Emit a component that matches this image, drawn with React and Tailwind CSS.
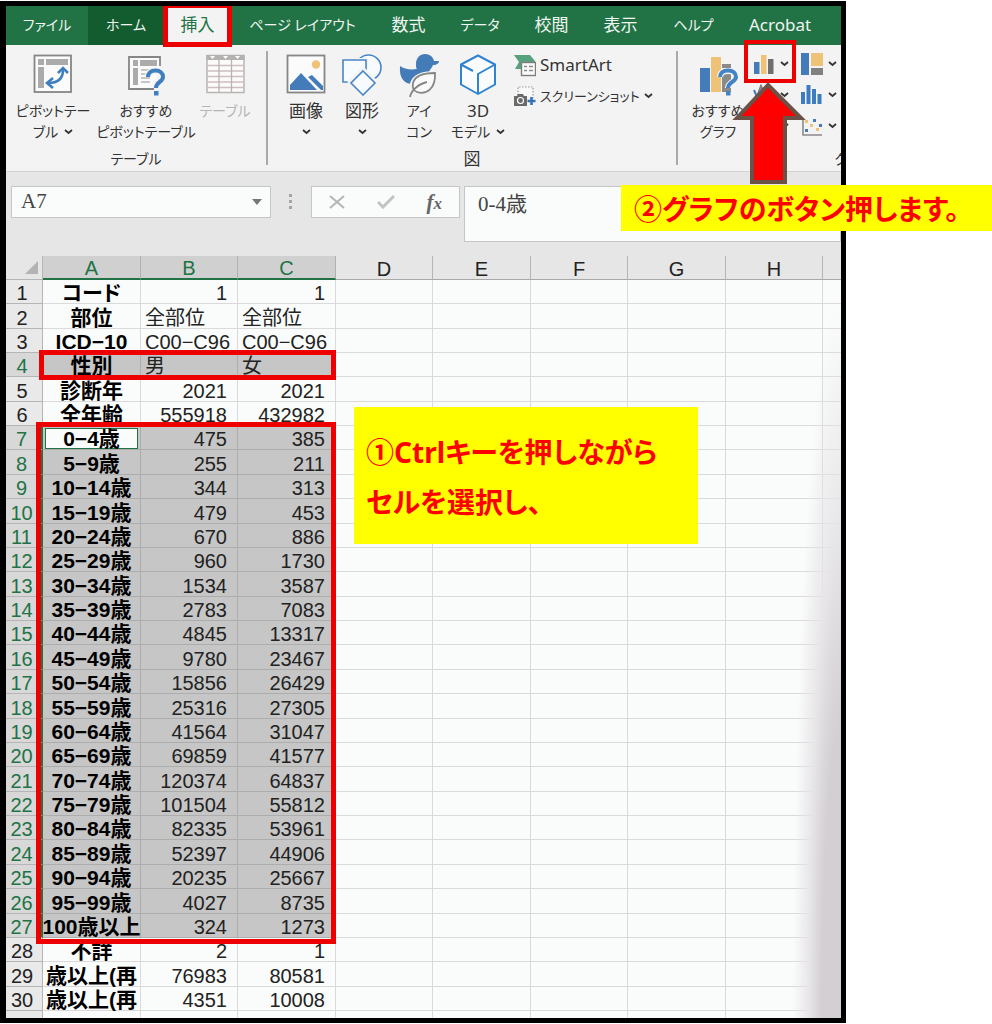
import React from 'react';

const tabs = [
  { label: 'ファイル', width: 'w-[82px]', size: 'text-[14px]' },
  { label: 'ホーム', width: 'w-[76px]', size: 'text-[14px]', hover: true },
  { label: '挿入', width: 'w-[67px]', size: 'text-[17px]', active: true },
  { label: 'ページ レイアウト', width: 'w-[143px]', size: 'text-[14px]' },
  { label: '数式', width: 'w-[69px]', size: 'text-[17px]' },
  { label: 'データ', width: 'w-[74px]', size: 'text-[14px]' },
  { label: '校閲', width: 'w-[69px]', size: 'text-[17px]' },
  { label: '表示', width: 'w-[69px]', size: 'text-[17px]' },
  { label: 'ヘルプ', width: 'w-[77px]', size: 'text-[14px]' },
  { label: 'Acrobat', width: 'w-[96px]', size: 'text-[17px]' },
];

const columns = ['A', 'B', 'C', 'D', 'E', 'F', 'G', 'H'];

const rows = [
  ['コード', '1', '1'],
  ['部位', '全部位', '全部位'],
  ['ICD−10', 'C00−C96', 'C00−C96'],
  ['性別', '男', '女'],
  ['診断年', '2021', '2021'],
  ['全年齢', '555918', '432982'],
  ['0−4歳', '475', '385'],
  ['5−9歳', '255', '211'],
  ['10−14歳', '344', '313'],
  ['15−19歳', '479', '453'],
  ['20−24歳', '670', '886'],
  ['25−29歳', '960', '1730'],
  ['30−34歳', '1534', '3587'],
  ['35−39歳', '2783', '7083'],
  ['40−44歳', '4845', '13317'],
  ['45−49歳', '9780', '23467'],
  ['50−54歳', '15856', '26429'],
  ['55−59歳', '25316', '27305'],
  ['60−64歳', '41564', '31047'],
  ['65−69歳', '69859', '41577'],
  ['70−74歳', '120374', '64837'],
  ['75−79歳', '101504', '55812'],
  ['80−84歳', '82335', '53961'],
  ['85−89歳', '52397', '44906'],
  ['90−94歳', '20235', '25667'],
  ['95−99歳', '4027', '8735'],
  ['100歳以上', '324', '1273'],
  ['不詳', '2', '1'],
  ['歳以上(再', '76983', '80581'],
  ['歳以上(再', '4351', '10008'],
];

const isSelected = (n) => n === 4 || (n >= 7 && n <= 27);

function Chevron() {
  return (
    <svg className="inline-block shrink-0" width="9" height="6" viewBox="0 0 9 6" fill="none" stroke="#333" strokeWidth="1.8">
      <path d="M1 1l3.5 3L8 1" />
    </svg>
  );
}

function PivotIcon() {
  return (
    <svg width="40" height="40" viewBox="0 0 40 40" fill="none">
      <rect x="1.5" y="1.5" width="36.5" height="36.5" fill="#fbfbfb" stroke="#868686" strokeWidth="1.8" />
      <path d="M5 5h6v6H5zM13 5h22v6H13zM5 13h6v21H5z" fill="#ababab" />
      <path d="M15 29C25 29 30 25 30 16" stroke="#3f7fc0" strokeWidth="2.6" />
      <path d="M25 19l5-5 5 5M20 24l-6 5 6 5" stroke="#3f7fc0" strokeWidth="2.6" />
    </svg>
  );
}

function RecommendedPivotIcon() {
  return (
    <svg width="40" height="42" viewBox="0 0 40 42" fill="none">
      <path d="M34 12V3H3v32h25" fill="#fbfbfb" stroke="#868686" strokeWidth="1.8" />
      <path d="M7 6h5v6H7zM14 6h17v6H14zM7 14h5v17H7z" fill="#ababab" />
      <path d="M15 16h8M15 20h6M15 24h9M15 28h9" stroke="#b5b5b5" strokeWidth="1.5" />
      <path d="M22 23c0-4 3-6 7.5-6s7.500 2 7.500 6c0 5-7 5-7 11" stroke="#f3f3f3" strokeWidth="7" />
      <path d="M22 23c0-4 3-6.500 7.500-6.500s7.500 2.500 7.500 6.500c0 5-7 5-7 11" stroke="#3f7fc0" strokeWidth="4" />
      <path d="M28 37h4.500v4.500H28z" fill="#3f7fc0" />
    </svg>
  );
}

function TableIcon() {
  return (
    <svg width="40" height="40" viewBox="0 0 40 40" fill="none">
      <rect x="2" y="1.500" width="37" height="37" fill="#fdfafa" stroke="#b9b4b4" strokeWidth="1.500" />
      <path d="M1.500 1h38v5h-38z" fill="#b3b1b1" />
      <path d="M5 2h5L7.500 5zM18 2h5l-2.500 3zM30 2h5l-2.500 3z" fill="#fff" />
      <path d="M2 11.500h37M2 17h37M2 22.500h37M2 28h37M2 33.500h37" stroke="#cdbfbf" strokeWidth="1.300" />
      <path d="M14 6v32M26.500 6v32" stroke="#b9b4b4" strokeWidth="1.300" />
    </svg>
  );
}

function ImageIcon() {
  return (
    <svg width="40" height="40" viewBox="0 0 40 40" fill="none">
      <rect x="1.500" y="1.500" width="37" height="37" fill="#fbfbfb" stroke="#868686" strokeWidth="1.800" />
      <circle cx="30" cy="10.500" r="4.200" fill="#eec377" />
      <path d="M4 36V31L15 19l16 17z" fill="#437cb8" />
      <path d="M22 23l4-2 11 11v4h-2z" fill="#437cb8" />
    </svg>
  );
}

function ShapesIcon() {
  return (
    <svg width="40" height="42" viewBox="0 0 40 42" fill="none" stroke="#4a86c5" strokeWidth="1.600">
      <circle cx="26.500" cy="13.500" r="12.500" fill="#f8fbfd" />
      <path d="M1 6h23v22H1z" fill="#f8fbfd" stroke="#f3f3f3" strokeWidth="4" />
      <path d="M1 6h23v22H1z" fill="#f8fbfd" />
      <path d="M21 15l13 13-13 13L8 28z" fill="#f3f3f3" stroke="#f3f3f3" strokeWidth="4" />
      <path d="M21 17l12 12-12 12L9 29z" fill="#f8fbfd" />
    </svg>
  );
}

function DuckIcon() {
  return (
    <svg width="40" height="44" viewBox="0 0 40 44" fill="none">
      <path d="M1 12c4 3 10 4 17 3-1-1-1-2-1-5 0-6 4-10 9-10 5 0 8 3 9 7l5 0c0 2-2 4-6 4-1 3-3 4-4 7-6 0-14 3-16 12C5 30 0 24 1 12z" fill="#437cb8" />
      <path d="M36 19c-10 0-21 2-23 11-1 5 2 8 5 9 9 3 20-3 18-20z" fill="#fafafa" stroke="#f3f3f3" strokeWidth="4" />
      <path d="M36 19c-10 0-20 2-22 10-1 5 1 8 4 9 9 3 19-3 18-19z" fill="#fafafa" stroke="#868686" strokeWidth="1.800" />
      <path d="M11 43c1-6 8-13 17-15" stroke="#868686" strokeWidth="1.800" />
    </svg>
  );
}

function CubeIcon() {
  return (
    <svg width="40" height="42" viewBox="0 0 40 42" fill="none" stroke="#2f83d0" strokeWidth="2" strokeLinejoin="round">
      <path d="M20 1.500l17 9v20l-17 9.500-17-9.500v-20z" fill="#f9fbfd" />
      <path d="M20 40V20l17-9.500M3 10.500l12 6.500" />
    </svg>
  );
}

function SmartArtIcon() {
  return (
    <svg width="22" height="23" viewBox="0 0 22 23" fill="none">
      <path d="M0 1h16l5 6v1H7v7H1l4-7z" fill="#58a17f" />
      <rect x="7.500" y="8.500" width="14" height="13" fill="#fafafa" stroke="#7d7d7d" strokeWidth="1.400" />
      <path d="M10 12.500h3M15 12.500h4M10 16.500h3M15 16.500h4" stroke="#8b8b8b" strokeWidth="1.500" />
    </svg>
  );
}

function ScreenshotIcon() {
  return (
    <svg width="22" height="22" viewBox="0 0 22 22" fill="none">
      <path d="M4 10V2h15v11" fill="#f8f8f8" stroke="#9a9a9a" strokeWidth="1.200" strokeDasharray="1.500 1.500" />
      <path d="M0 11h3l1-2h5l1 2h3v10H0z" fill="#6a6a6a" />
      <circle cx="6.500" cy="15.500" r="3" fill="#6a6a6a" stroke="#fff" strokeWidth="1.200" />
      <path d="M17.500 12v8M13.500 16h8" stroke="#3573b5" strokeWidth="2.600" />
    </svg>
  );
}

function RecommendedChartIcon() {
  return (
    <svg width="40" height="42" viewBox="0 0 40 42" fill="none">
      <path d="M2 14h10v24H2z" fill="#437cb8" />
      <path d="M13 3h10v35H13z" fill="#eec377" />
      <path d="M24 10h9v4h-9zM24 16h9v22h-9z" fill="#8a8a8a" />
      <path d="M22 23c0-4 3-6 8-6s8 2 8 6c0 5-8 5-8 11" stroke="#f3f3f3" strokeWidth="6" />
      <path d="M22 23c0-4 3-6.500 8-6.500s8 2.500 8 6.500c0 5-8 5-8 11" stroke="#4383c4" strokeWidth="4" />
      <path d="M28 37h4.500v4.500H28z" fill="#4383c4" />
    </svg>
  );
}

function ColumnChartIcon() {
  return (
    <svg width="22" height="22" viewBox="0 0 22 22">
      <path d="M1 9h5.500v12H1z" fill="#437cb8" />
      <path d="M8 2h5.500v19H8z" fill="#eec377" />
      <path d="M15 6h5.500v15H15z" fill="#6f6f6f" />
    </svg>
  );
}

function LineChartIcon() {
  return (
    <svg width="22" height="22" viewBox="0 0 22 22" fill="none" strokeWidth="2">
      <path d="M1 6l5 12 6-8 8 8" stroke="#437cb8" />
      <path d="M2 18L8 2l6 14 6-6" stroke="#7d7d7d" />
    </svg>
  );
}

function TreemapIcon() {
  return (
    <svg width="22" height="22" viewBox="0 0 22 22">
      <path d="M0 0h8v22H0z" fill="#437cb8" />
      <path d="M10 0h12v13H10z" fill="#eec377" />
      <path d="M10 15h12v7H10z" fill="#808080" />
    </svg>
  );
}

function HistogramIcon() {
  return (
    <svg width="22" height="22" viewBox="0 0 22 22">
      <path d="M0 8h4v12H0zM5.500 1h4v19h-4zM11 5h4v15h-4zM16.500 10h4v10h-4z" fill="#3c7cc0" />
    </svg>
  );
}

function ScatterIcon() {
  return (
    <svg width="22" height="22" viewBox="0 0 22 22">
      <path d="M2 4v16h19" fill="none" stroke="#8a8a8a" strokeWidth="1.600" />
      <path d="M4 5h3v3H4zM9 9h3v3H9zM15 13h3v3h-3z" fill="#eec377" />
      <path d="M12 4h3v3h-3zM18 9h3v3h-3zM4 14h3v3H4z" fill="#437cb8" />
    </svg>
  );
}

function PieIcon() {
  return (
    <svg width="22" height="22" viewBox="0 0 22 22">
      <circle cx="11" cy="11" r="8" fill="#437cb8" />
      <path d="M11 11V3a8 8 0 0 1 8 8z" fill="#eec377" />
    </svg>
  );
}

function RibbonButton({ icon, width, children }) {
  return (
    <button type="button" className={`flex shrink-0 flex-col items-center whitespace-nowrap ${width}`}>
      <span className="mb-[2px] flex h-[44px] items-start">{icon}</span>
      {children}
    </button>
  );
}

function ChartButton({ icon, label }) {
  return (
    <button type="button" aria-label={label} className="flex h-[31px] items-center gap-[5px]">
      {icon}
      <Chevron />
    </button>
  );
}

function Ribbon() {
  return (
    <div className="flex h-[127px] border-b border-[#d2d2d2] bg-[#f3f3f3] text-[14px] leading-[21px] text-[#333]">
      {/* テーブル */}
      <section className="flex w-[260px] shrink-0 flex-col pt-[9px]">
        <div className="flex h-[94px]">
          <RibbonButton width="w-[94px]" icon={<PivotIcon />}>
            <span>ピボットテー</span>
            <span className="flex items-center gap-1.5">ブル <Chevron /></span>
          </RibbonButton>
          <RibbonButton width="w-[92px]" icon={<RecommendedPivotIcon />}>
            <span>おすすめ</span>
            <span>ピボットテーブル</span>
          </RibbonButton>
          <RibbonButton width="w-[66px] text-[#b5b5b5]" icon={<TableIcon />}>
            <span>テーブル</span>
          </RibbonButton>
        </div>
        <div className="text-center">テーブル</div>
      </section>
      <div className="mt-[6px] h-[114px] w-[2px] shrink-0 bg-[#a9a9a9]" />

      {/* 図 */}
      <section className="flex w-[408px] shrink-0 flex-col pt-[9px]">
        <div className="flex h-[94px] pl-[10px]">
          <RibbonButton width="w-[56px]" icon={<ImageIcon />}>
            <span className="text-[17px]">画像</span>
            <span className="flex h-[21px] items-center"><Chevron /></span>
          </RibbonButton>
          <RibbonButton width="w-[56px]" icon={<ShapesIcon />}>
            <span className="text-[17px]">図形</span>
            <span className="flex h-[21px] items-center"><Chevron /></span>
          </RibbonButton>
          <RibbonButton width="w-[58px]" icon={<DuckIcon />}>
            <span>アイ</span>
            <span>コン</span>
          </RibbonButton>
          <RibbonButton width="w-[60px]" icon={<CubeIcon />}>
            <span className="text-[17px]">3D</span>
            <span className="flex items-center gap-1.5">モデル <Chevron /></span>
          </RibbonButton>
          <div className="flex flex-col pl-[6px]">
            <button type="button" className="flex h-[28px] items-start gap-1 text-[17px]">
              <SmartArtIcon /> SmartArt
            </button>
            <button type="button" className="flex h-[28px] items-center gap-1 whitespace-nowrap">
              <ScreenshotIcon /> <span className="text-[13px]">スクリーンショット</span> <Chevron />
            </button>
          </div>
        </div>
        <div className="text-center text-[17px]">図</div>
      </section>
      <div className="mt-[6px] h-[114px] w-[2px] shrink-0 bg-[#a9a9a9]" />

      {/* グラフ */}
      <section className="flex w-[350px] shrink-0 flex-col pt-[9px]">
        <div className="flex h-[94px] pl-[10px]">
          <RibbonButton width="w-[60px]" icon={<RecommendedChartIcon />}>
            <span>おすすめ</span>
            <span>グラフ</span>
          </RibbonButton>
          <div className="-mt-1.5 flex pl-[5px]">
            <div className="relative flex w-[48px] flex-col">
              <ChartButton label="縦棒グラフ" icon={<ColumnChartIcon />} />
              <ChartButton label="折れ線グラフ" icon={<LineChartIcon />} />
              <ChartButton label="円グラフ" icon={<PieIcon />} />
              <div className="absolute -left-[9px] -top-[8px] h-[43px] w-[52px] border-4 border-[#ee0000]" />
              <svg className="absolute -left-[21px] top-[34px]" width="76" height="104" viewBox="0 0 76 104">
                <path d="M36 3L69 36H53v64H20V36H5z" fill="#fe0000" stroke="#6b5146" strokeWidth="4" />
              </svg>
            </div>
            <div className="flex flex-col">
              <ChartButton label="ツリーマップ" icon={<TreemapIcon />} />
              <ChartButton label="ヒストグラム" icon={<HistogramIcon />} />
              <ChartButton label="散布図" icon={<ScatterIcon />} />
            </div>
          </div>
        </div>
        <div className="text-center">グラフ</div>
      </section>
    </div>
  );
}

function FormulaBar() {
  return (
    <div className="flex h-[84px] items-start bg-[#e6e6e6] pl-[5px] pt-[14px]">
      <div className="flex h-[32px] w-[260px] shrink-0 items-center border border-[#c6c6c6] bg-[#fafcfb] pr-[8px]">
        <input
          aria-label="名前ボックス"
          defaultValue="A7"
          className="min-w-0 flex-1 bg-transparent pl-[9px] font-['Liberation_Serif',serif] text-[21px] text-[#444] outline-none"
        />
        <svg width="10" height="6" viewBox="0 0 10 6"><path d="M0 0h10L5 6z" fill="#777" /></svg>
      </div>
      <svg className="mx-[18px] mt-[8px] shrink-0" width="4" height="16" viewBox="0 0 4 16" fill="#a5a5a5">
        <path d="M0 0h3v3H0zM0 6h3v3H0zM0 12h3v3H0z" />
      </svg>
      <div className="flex h-[32px] w-[149px] shrink-0 items-center justify-between border border-[#c6c6c6] bg-[#fafcfb] px-[17px]">
        <button type="button" aria-label="キャンセル">
          <svg width="16" height="14" viewBox="0 0 16 14" stroke="#b5b5b5" strokeWidth="2"><path d="M1 1l14 12M15 1L1 13" /></svg>
        </button>
        <button type="button" aria-label="入力">
          <svg width="18" height="14" viewBox="0 0 18 14" fill="none" stroke="#c2c2c2" strokeWidth="3"><path d="M1 7l5 5L17 1" /></svg>
        </button>
        <button type="button" className="font-['Liberation_Serif',serif] text-[21px] font-bold italic leading-none text-[#666]">
          f<span className="text-[17px]">x</span>
        </button>
      </div>
      <textarea
        aria-label="数式バー"
        defaultValue="0-4歳"
        className="ml-[4px] h-[56px] min-w-0 flex-1 resize-none border border-[#c6c6c6] bg-[#fafcfb] pl-[13px] pt-[4px] font-['Liberation_Serif','Noto_Sans_CJK_JP',serif] text-[21px] leading-[26px] text-[#444] outline-none"
      />
    </div>
  );
}

function Sheet() {
  return (
    <div className="relative">
      <table className="w-full table-fixed border-separate border-spacing-0 whitespace-nowrap bg-[#fafcfb] font-['Liberation_Sans','Noto_Sans_CJK_JP',sans-serif] text-[20px] leading-[20px] text-[#222]">
        <colgroup>
          <col className="w-[37px]" />
          {columns.map((c) => (
            <col key={c} className="even:w-[98px] odd:w-[97px]" />
          ))}
          <col />
        </colgroup>
        <thead>
          <tr className="h-[24px] bg-[#e6e6e6]">
            <th className="border-b border-r border-[#b5b5b5] p-0">
              <svg className="ml-auto mr-[4px]" width="13" height="13" viewBox="0 0 13 13"><path d="M13 0v13H0z" fill="#b3b3b3" /></svg>
            </th>
            {columns.map((c, i) => (
              <th
                key={c}
                scope="col"
                className={`border-r p-0 pt-[2px] font-normal ${i < 3 ? 'border-b-2 border-r-[#b0b0b0] border-b-[#217346] bg-[#d0d0d0] text-[#217346]' : 'border-b border-r-[#b5b5b5] border-b-[#a8a8a8]'}`}
              >
                {c}
              </th>
            ))}
            <th className="border-b border-[#a8a8a8] p-0" />
          </tr>
        </thead>
        <tbody>
          {rows.map(([name, male, female], i) => {
            const n = i + 1;
            const sel = isSelected(n);
            const line = sel ? 'border-[#adadad] bg-[#c6c6c6]' : 'border-[#dcd9db]';
            const align = /^\d+$/.test(male) ? 'text-right pr-[10px]' : 'text-left pl-[4px]';
            return (
              <tr key={n} className="h-[24px] [&:nth-child(8n)]:h-[25px] [&:nth-child(8n+2)]:h-[25px] [&:nth-child(8n+5)]:h-[25px]">
                <th
                  scope="row"
                  className={`border-b border-b-[#b5b5b5] p-0 pr-[4px] pt-[3px] text-center font-normal ${n >= 7 && n <= 27 ? 'border-r-2 border-r-[#217346]' : 'border-r border-r-[#b5b5b5]'} ${sel ? 'bg-[#d8d8d8] text-[#217346]' : 'bg-[#e9e9e9]'}`}
                >
                  {n}
                </th>
                <td className={`border-b border-r p-0 text-[21px] font-bold text-black ${line}`}>
                  {n === 7 ? (
                    <div className="mx-[2px] mt-[2px] flex h-[21px] items-center justify-center border border-[#217346] bg-[#fafcfb]">{name}</div>
                  ) : (
                    <div className="flex justify-center pt-[3px]">{name}</div>
                  )}
                </td>
                <td className={`border-b border-r p-0 pt-[3px] ${align} ${line}`}>{male}</td>
                <td className={`border-b border-r p-0 pt-[3px] ${align} ${line}`}>{female}</td>
                {columns.slice(3).map((c) => (
                  <td key={c} className="border-b border-r border-[#dcd9db] p-0" />
                ))}
                <td className="border-b border-[#dcd9db] p-0" />
              </tr>
            );
          })}
          <tr className="h-[7px]">
            <td className="border-r border-[#b5b5b5] bg-[#e9e9e9] p-0" />
            {columns.map((c) => (
              <td key={c} className="border-r border-[#dcd9db] p-0" />
            ))}
            <td className="p-0" />
          </tr>
        </tbody>
      </table>

      {/* 右端の影 */}
      <div className="absolute bottom-0 right-0 top-[40px] w-[48px] bg-[radial-gradient(48px_100%_at_100%_100%,#d3cfd2_40%,#e6e4e7_65%,transparent)]" />

      {/* 選択範囲の枠 */}
      <div className="absolute left-[33px] top-[94px] h-[30px] w-[297px] border-[5px] border-[#ee0000]" />
      <div className="absolute left-[30px] top-[166px] h-[522px] w-[300px] border-[5px] border-[#ee0000]" />

      <div className="absolute left-[348px] top-[151px] w-[344px] bg-[#ffff00] px-3 pb-[17px] pt-[20px] text-[28px] font-bold leading-[50px] text-[#fe0000]">
        <p>①Ctrlキーを押しながら</p>
        <p>セルを選択し、</p>
      </div>
    </div>
  );
}

function App() {
  return (
    <div className="relative bg-white pr-[146px] pt-px font-['Noto_Sans','Noto_Sans_CJK_JP',sans-serif] [font-feature-settings:'palt']">
      <main className="overflow-hidden border-[5px] border-l-[6px] border-black">
        <nav className="flex h-[39px] bg-[#217346] text-[#f0f5f1]">
          {tabs.map((tab) => (
            <button
              key={tab.label}
              type="button"
              className={`relative shrink-0 whitespace-nowrap pb-[2px] ${tab.width} ${tab.size} ${tab.active ? 'bg-[#f3f3f3] text-[#217346]' : ''} ${tab.hover ? 'bg-[#125c2f]' : ''}`}
            >
              {tab.label}
              {tab.active && <span className="absolute -bottom-[2px] -left-px -right-px -top-[3px] border-[5px] border-[#ee0000]" />}
            </button>
          ))}
        </nav>
        <Ribbon />
        <FormulaBar />
        <Sheet />
      </main>

      <p className="absolute right-0 top-[185px] w-[371px] whitespace-nowrap bg-[#ffff00] pl-[13px] pt-[2px] text-[28px] font-bold leading-[44px] text-[#fe0000]">
        ②グラフのボタン押します。
      </p>
    </div>
  );
}

export default App;
